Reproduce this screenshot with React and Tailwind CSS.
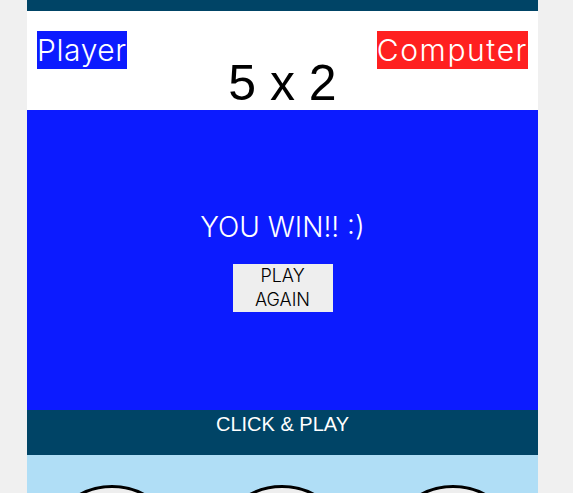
import React from "react";

const Circle = () => (
  <div className="flex justify-center">
    <div className="w-[136px] h-[136px] rounded-full border-[3px] border-black bg-[#eeeeee]" />
  </div>
);

export default function App() {
  return (
    <div className="min-h-screen bg-[#f0f0f0]">
      <div className="mx-[27px] w-[511px] overflow-hidden h-[493px]">
        <div className="h-[11px] bg-[#004466]" />
        <header className="h-[99px] bg-white grid grid-cols-3 px-[10px] pt-[20px] font-['Inter',sans-serif] font-light">
          <div>
            <span className="bg-[#0c1bff] text-white text-[30px] leading-[38px] tracking-[0.6px] inline-block">Player</span>
          </div>
          <div className="mt-[27px] text-center whitespace-nowrap font-['Liberation_Sans',sans-serif] font-normal text-[50px] leading-none text-black">
            5 x 2
          </div>
          <div className="text-right">
            <span className="bg-[#ff2020] text-white text-[30px] leading-[38px] tracking-[1.6px] inline-block">Computer</span>
          </div>
        </header>
        <section className="h-[300px] bg-[#0c1bff] flex flex-col items-center justify-center font-['Inter',sans-serif] font-light">
          <p className="text-white text-[28px] leading-[36px]">YOU WIN!! :)</p>
          <button className="mt-[19px] w-[100px] bg-[#eeeeee] text-black text-[18px] leading-[24px] font-light">
            PLAY AGAIN
          </button>
        </section>
        <div className="h-[45px] bg-[#004466] pt-[4px] text-center text-white font-['Liberation_Sans',sans-serif] text-[20px] leading-none">
          CLICK &amp; PLAY
        </div>
        <div className="bg-[#b0def6] grid grid-cols-3 pt-[30px] h-[200px]">
          <Circle />
          <Circle />
          <Circle />
        </div>
      </div>
    </div>
  );
}
